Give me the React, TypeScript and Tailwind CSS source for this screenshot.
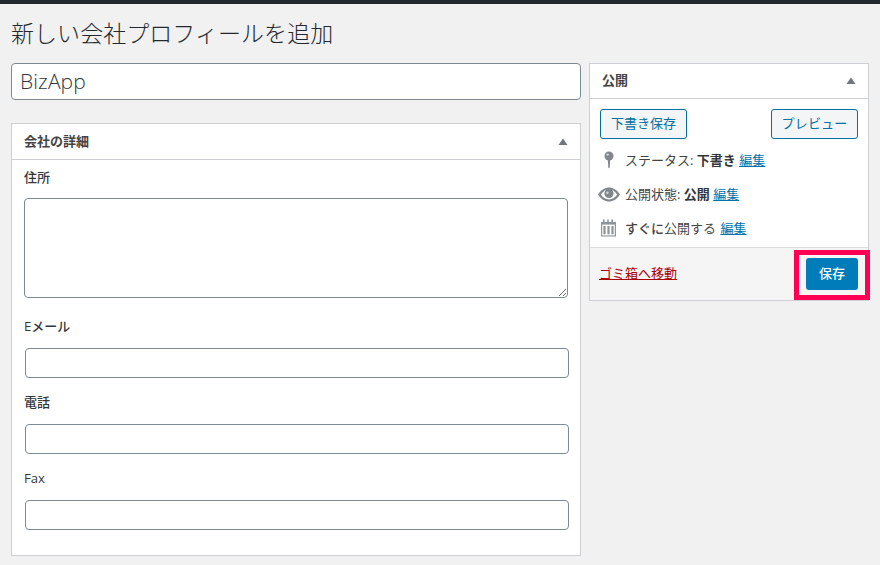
const font = { fontFamily: '"Open Sans","Noto Sans CJK JP",sans-serif' };

function Tri() {
  return (
    <svg width="10" height="8" viewBox="0 0 10 8" className="block">
      <path d="M5 0.5 L9.5 7 L0.5 7 Z" fill="#72777c" />
    </svg>
  );
}

function Pin() {
  return (
    <svg width="12" height="18" viewBox="0 0 12 18">
      <circle cx="6" cy="5" r="4.5" fill="#82878c" />
      <path d="M4.8 8.5h2.4L6.7 16.5a.7.7 0 0 1-1.4 0Z" fill="#82878c" />
      <circle cx="4.6" cy="3.6" r="1.2" fill="#d5d7d9" />
    </svg>
  );
}

function Eye() {
  return (
    <svg width="22" height="15" viewBox="0 0 22 15">
      <path d="M0 7.5 C3.5 2.5 7 .5 11 .5 C15 .5 18.5 2.5 22 7.5 C18.5 12.5 15 14.5 11 14.5 C7 14.5 3.5 12.5 0 7.5 Z" fill="#82878c" />
      <path d="M2.8 7.5 C4.8 5 6.5 3.6 8 3 A4.6 4.6 0 1 0 14 3 C15.5 3.6 17.2 5 19.2 7.5 C16.8 10.8 14 12.4 11 12.4 C8 12.4 5.2 10.8 2.8 7.5 Z" fill="#fff" />
      <circle cx="9.4" cy="5.8" r="1.2" fill="#d5d7d9" />
    </svg>
  );
}

function Cal() {
  return (
    <svg width="17" height="18" viewBox="0 0 17 18">
      <path d="M1 3h2V.5h1.6V3h2.6V.5h1.6V3h2.6V.5H13V3h3v14.5H1Z" fill="#8f9498" />
      <rect x="2.2" y="5.6" width="12.6" height="10.8" fill="#fff" />
      <path d="M3.4 7h2.2v8.2H3.4ZM7.4 7h2.2v8.2H7.4ZM11.4 7h2.2v8.2h-2.2Z" fill="#8f9498" />
    </svg>
  );
}

function Field({ label, className, labelClass }: { label: string; className: string; labelClass: string }) {
  return (
    <div className={className}>
      <div className={labelClass}>{label}</div>
      <input className="mt-[12px] block w-[544px] h-[30px] rounded-[4px] border border-[#7e8993] bg-white" />
    </div>
  );
}

export default function App() {
  return (
    <div style={font} className="w-[880px] h-[565px] overflow-hidden bg-[#f1f1f1] text-[#444]">
      <div className="h-[4px] bg-[#23282d]" />
      <h1 className="pl-[11px] pt-[13px] h-[59px] text-[23px] leading-[32px] tracking-[0.05px] text-[#23282d] font-light">
        新しい会社プロフィールを追加
      </h1>
      <div className="flex items-start pl-[11px] gap-[8px]">
        <div className="w-[570px] shrink-0">
          <div className="h-[37px] rounded-[4px] border border-[#7e8993] bg-white pl-[8px] text-[21px] leading-[35px] font-light tracking-[0.1px] text-[#32373c]">
            BizApp
          </div>
          <section className="mt-[23px] h-[433px] border border-[#ccd0d4] bg-white">
            <div className="h-[36px] flex items-center justify-between pl-[12px] pr-[12px] border-b border-[#ccd0d4]">
              <span className="text-[13px] font-bold text-[#444]">会社の詳細</span>
              <Tri />
            </div>
            <div className="pl-[12px]">
              <div className="pt-[7px] text-[13px] leading-[20px] font-medium text-[#32373c]">住所</div>
              <textarea className="mt-[11px] block w-[544px] h-[100px] rounded-[4px] border border-[#7e8993] bg-white" />
              <Field label="Eメール" labelClass="text-[13px] leading-[20px] font-medium text-[#32373c] ml-[-1px]" className="pt-[18px] pl-[1px]" />
              <Field label="電話" labelClass="text-[13px] leading-[20px] font-medium text-[#32373c] ml-[-1px]" className="pt-[14px] pl-[1px]" />
              <Field label="Fax" labelClass="text-[13px] leading-[20px] font-normal text-[#32373c] ml-[-1px]" className="pt-[14px] pl-[1px]" />
            </div>
          </section>
        </div>
        <aside className="relative w-[280px] h-[238px] border border-[#ccd0d4] bg-white text-[13px] flex flex-col">
          <div className="h-[35px] shrink-0 flex items-center justify-between pl-[12px] pr-[12px] border-b border-[#ccd0d4]">
            <span className="text-[13px] font-bold text-[#444]">公開</span>
            <Tri />
          </div>
          <div className="flex-1 px-[10px] pt-[10px]">
            <div className="flex justify-between">
              <button className="w-[87px] h-[30px] rounded-[3px] border border-[#0071a1] bg-[#f3f5f6] text-[13px] text-[#0071a1]">下書き保存</button>
              <button className="w-[87px] h-[30px] rounded-[3px] border border-[#0071a1] bg-[#f3f5f6] text-[13px] tracking-[0.2px] text-[#0071a1]">プレビュー</button>
            </div>
            <div className="mt-[10px] h-[22px] flex items-center leading-[22px]">
              <span className="w-[25px] pl-[3px] flex"><Pin /></span>
              <span>ステータス: <b className="font-bold text-[#32373c]">下書き</b> <a className="underline text-[#0073aa]">編集</a></span>
            </div>
            <div className="mt-[12px] h-[22px] flex items-center leading-[22px]">
              <span className="w-[25px] -ml-[2px] flex shrink-0"><Eye /></span>
              <span className="ml-[2px]">公開状態: <b className="font-bold text-[#32373c]">公開</b> <a className="underline text-[#0073aa]">編集</a></span>
            </div>
            <div className="mt-[12px] h-[22px] flex items-center leading-[22px]">
              <span className="w-[25px] flex"><Cal /></span>
              <span><span className="font-medium">すぐに</span>公開する <a className="ml-[1px] underline text-[#0073aa]">編集</a></span>
            </div>
          </div>
          <div className="h-[53px] shrink-0 flex items-center justify-between pl-[9px] pr-[10px] border-t border-[#dddddd] bg-[#f5f5f5]">
            <a className="underline text-[#a00] text-[13px]">ゴミ箱へ移動</a>
            <button className="w-[52px] h-[32px] rounded-[3px] bg-[#007cba] text-white text-[13px] font-medium">保存</button>
          </div>
          <div className="absolute left-[204px] top-[186px] w-[76px] h-[50px] border-[5px] border-[#ff0055]" />
        </aside>
      </div>
    </div>
  );
}
